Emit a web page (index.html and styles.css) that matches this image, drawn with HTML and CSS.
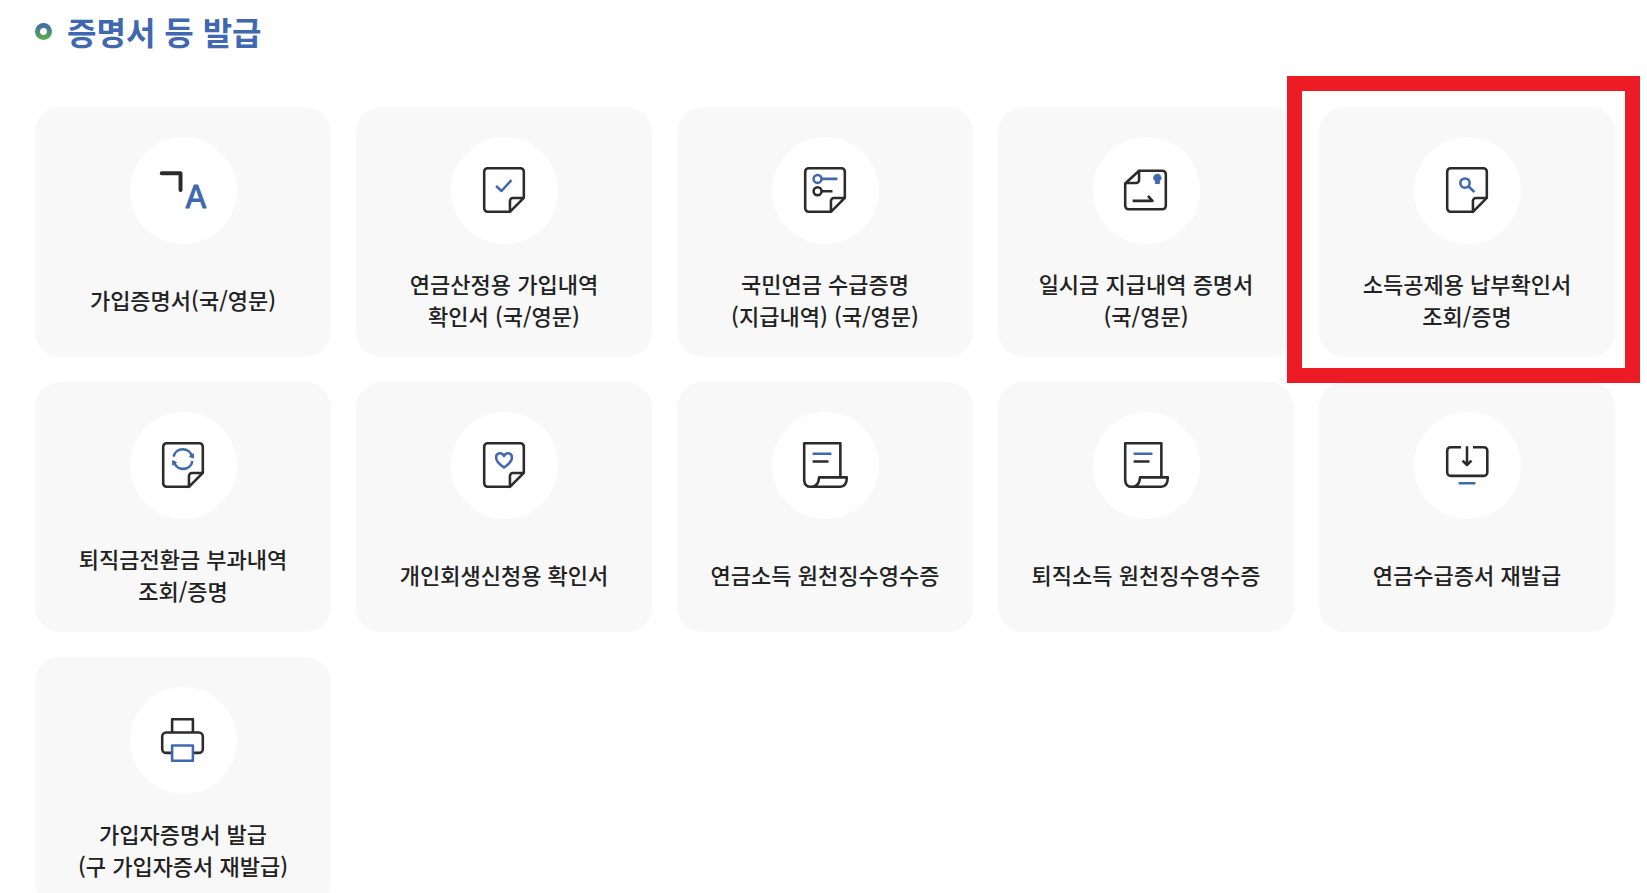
FILE: index.html
```html
<!DOCTYPE html>
<html lang="ko">
<head>
<meta charset="utf-8">
<meta name="viewport" content="width=device-width, initial-scale=1">
<title>증명서 등 발급</title>
<link rel="stylesheet" href="styles.css">
</head>
<body>
<svg class="defs" aria-hidden="true">
  <symbol id="sheet" viewBox="0 0 108 108">
    <path d="M59.500 75.500H37a3.500 3.500 0 0 1-3.500-3.500V35a3.500 3.500 0 0 1 3.500-3.500H70a3.500 3.500 0 0 1 3.500 3.500V61.500L59.500 75.500V64.500a3 3 0 0 1 3-3H73.500"/>
  </symbol>
  <symbol id="scroll" viewBox="0 0 108 108">
    <path d="M69 66V31.500H32.500V69Q33 75.500 39 75.500H69Q75.500 75 75.500 66H47.500Q47 75.500 39.500 75.500"/>
    <path class="accent" d="M41 42.200H60"/>
    <path d="M41 50H57"/>
  </symbol>
</svg>
<main class="page">
  <h1 class="title"><span class="bullet"></span>증명서 등 발급</h1>
  <ul class="cards">
    <li><a class="card" href="#">
      <svg class="icon" viewBox="0 0 108 108" aria-hidden="true"><path class="bold" d="M32 36.500H51V53.500"/><text class="latin" x="66.500" y="71.500" text-anchor="middle">A</text></svg>
      <span class="label">가입증명서(국/영문)</span></a></li>
    <li><a class="card" href="#">
      <svg class="icon" viewBox="0 0 108 108" aria-hidden="true"><use href="#sheet"/><path class="accent" d="M45.500 49.500L51 54.500L61 43.500"/></svg>
      <span class="label">연금산정용 가입내역<br>확인서 (국/영문)</span></a></li>
    <li><a class="card" href="#">
      <svg class="icon" viewBox="0 0 108 108" aria-hidden="true"><use href="#sheet"/><g class="accent"><circle cx="46" cy="42.300" r="4"/><path d="M50 42.300H66"/></g><circle cx="46" cy="54.700" r="4"/><path d="M50 54.700H61"/></svg>
      <span class="label">국민연금 수급증명<br>(지급내역) (국/영문)</span></a></li>
    <li><a class="card" href="#">
      <svg class="icon" viewBox="0 0 108 108" aria-hidden="true"><path d="M46.500 34H70a3.500 3.500 0 0 1 3.500 3.500V69.500a3.500 3.500 0 0 1-3.500 3.500H36a3.500 3.500 0 0 1-3.500-3.500V47L46.500 34V43.500a3 3 0 0 1-3 3H32.500"/><path d="M40 64.500H60L55.500 59.500"/><path class="seal" d="M65 37.500a3.800 3.800 0 0 1 2 7.000V47H63V44.500a3.800 3.800 0 0 1 2-7z"/></svg>
      <span class="label">일시금 지급내역 증명서<br>(국/영문)</span></a></li>
    <li class="highlight"><a class="card" href="#">
      <svg class="icon" viewBox="0 0 108 108" aria-hidden="true"><use href="#sheet"/><g class="accent"><circle cx="51.500" cy="46.500" r="4.700"/><path d="M55 50L61 55.500"/></g></svg>
      <span class="label">소득공제용 납부확인서<br>조회/증명</span></a></li>
    <li><a class="card" href="#">
      <svg class="icon" viewBox="0 0 108 108" aria-hidden="true"><use href="#sheet"/><g class="accent"><path d="M44 45a9.500 9.500 0 0 1 18.500 0M63 49.500a9.500 9.500 0 0 1-18.500 1"/><path class="tip" d="M64 42V46.500L60 45zM43 53.500V49L47 51z"/></g></svg>
      <span class="label">퇴직금전환금 부과내역<br>조회/증명</span></a></li>
    <li><a class="card" href="#">
      <svg class="icon" viewBox="0 0 108 108" aria-hidden="true"><use href="#sheet"/><path class="accent" d="M53.500 56C49 53 45.500 50 45.500 46C45.500 41 51.500 40 53.500 44.500C55.500 40 61.500 41 61.500 46C61.500 50 58 53 53.500 56z"/></svg>
      <span class="label">개인회생신청용 확인서</span></a></li>
    <li><a class="card" href="#">
      <svg class="icon" viewBox="0 0 108 108" aria-hidden="true"><use href="#scroll"/></svg>
      <span class="label">연금소득 원천징수영수증</span></a></li>
    <li><a class="card" href="#">
      <svg class="icon" viewBox="0 0 108 108" aria-hidden="true"><use href="#scroll"/></svg>
      <span class="label">퇴직소득 원천징수영수증</span></a></li>
    <li><a class="card" href="#">
      <svg class="icon" viewBox="0 0 108 108" aria-hidden="true"><path d="M47.500 35.500H37a3.500 3.500 0 0 0-3.500 3.500V61a3.500 3.500 0 0 0 3.500 3.500H70.500a3.500 3.500 0 0 0 3.500-3.500V39a3.500 3.500 0 0 0-3.500-3.500H59.500M53.500 34.500V53M49 49L53.500 53.500L58 49"/><path class="accent" d="M45 72H62"/></svg>
      <span class="label">연금수급증서 재발급</span></a></li>
    <li><a class="card" href="#">
      <svg class="icon" viewBox="0 0 108 108" aria-hidden="true"><path d="M42.500 66.500H36.500a4 4 0 0 1-4-4V50a4 4 0 0 1 4-4H69.500a4 4 0 0 1 4 4V62.500a4 4 0 0 1-4 4H63.500M42.500 46V32.500H63.500V46"/><rect class="accent" x="42.500" y="59" width="21" height="15.500"/></svg>
      <span class="label">가입자증명서 발급<br>(구 가입자증서 재발급)</span></a></li>
  </ul>
</main>
</body>
</html>
```
FILE: styles.css
```css
* {
  box-sizing: border-box;
}

html {
  scrollbar-width: none;
}

body {
  margin: 0;
  background: #fff;
  color: #222;
  font-family: "Noto Sans CJK KR", "Noto Sans", sans-serif;
}

.defs {
  position: absolute;
  width: 0;
  height: 0;
}

.page {
  padding: 8px 32px 24px 35px;
}

.title {
  display: flex;
  align-items: center;
  gap: 15px;
  margin: 0 0 52px;
  color: #4068b0;
  font-size: 32px;
  font-weight: 700;
  line-height: 47px;
}

.bullet {
  width: 17px;
  height: 17px;
  border-radius: 50%;
  background:
    radial-gradient(circle, #fff 3px, transparent 4px),
    linear-gradient(#4068b0, #5cac4c);
}

.cards {
  display: grid;
  grid-template-columns: repeat(5, 1fr);
  gap: 25px;
  margin: 0;
  padding: 0;
  list-style: none;
}

.card {
  display: flex;
  flex-direction: column;
  align-items: center;
  gap: 23px;
  padding: 30px 8px 26px;
  border-radius: 25px;
  background: #f8f8f8;
  color: inherit;
  text-decoration: none;
}

.highlight {
  position: relative;
}

.highlight::after {
  content: "";
  position: absolute;
  z-index: 1;
  inset: -31px -25px -26px -32px;
  border: 15px solid #ed1c24;
  pointer-events: none;
}

.icon {
  width: 107px;
  height: 107px;
  border-radius: 50%;
  background: #fff;
  fill: none;
  stroke: #2b2b2b;
  stroke-width: 2.6;
  stroke-linejoin: round;
}

.bold {
  stroke-width: 4;
  stroke-linecap: round;
}

.accent {
  stroke: #4068b0;
}

.tip,
.seal {
  fill: #4068b0;
  stroke: #4068b0;
  stroke-width: 1;
}

.latin {
  fill: #4068b0;
  stroke: #4068b0;
  stroke-width: 1;
  font-family: Inter, sans-serif;
  font-size: 32px;
  font-weight: 400;
}

.label {
  display: flex;
  align-items: center;
  min-height: 64px;
  font-size: 22px;
  font-weight: 500;
  line-height: 32px;
  text-align: center;
  word-break: keep-all;
}
```
